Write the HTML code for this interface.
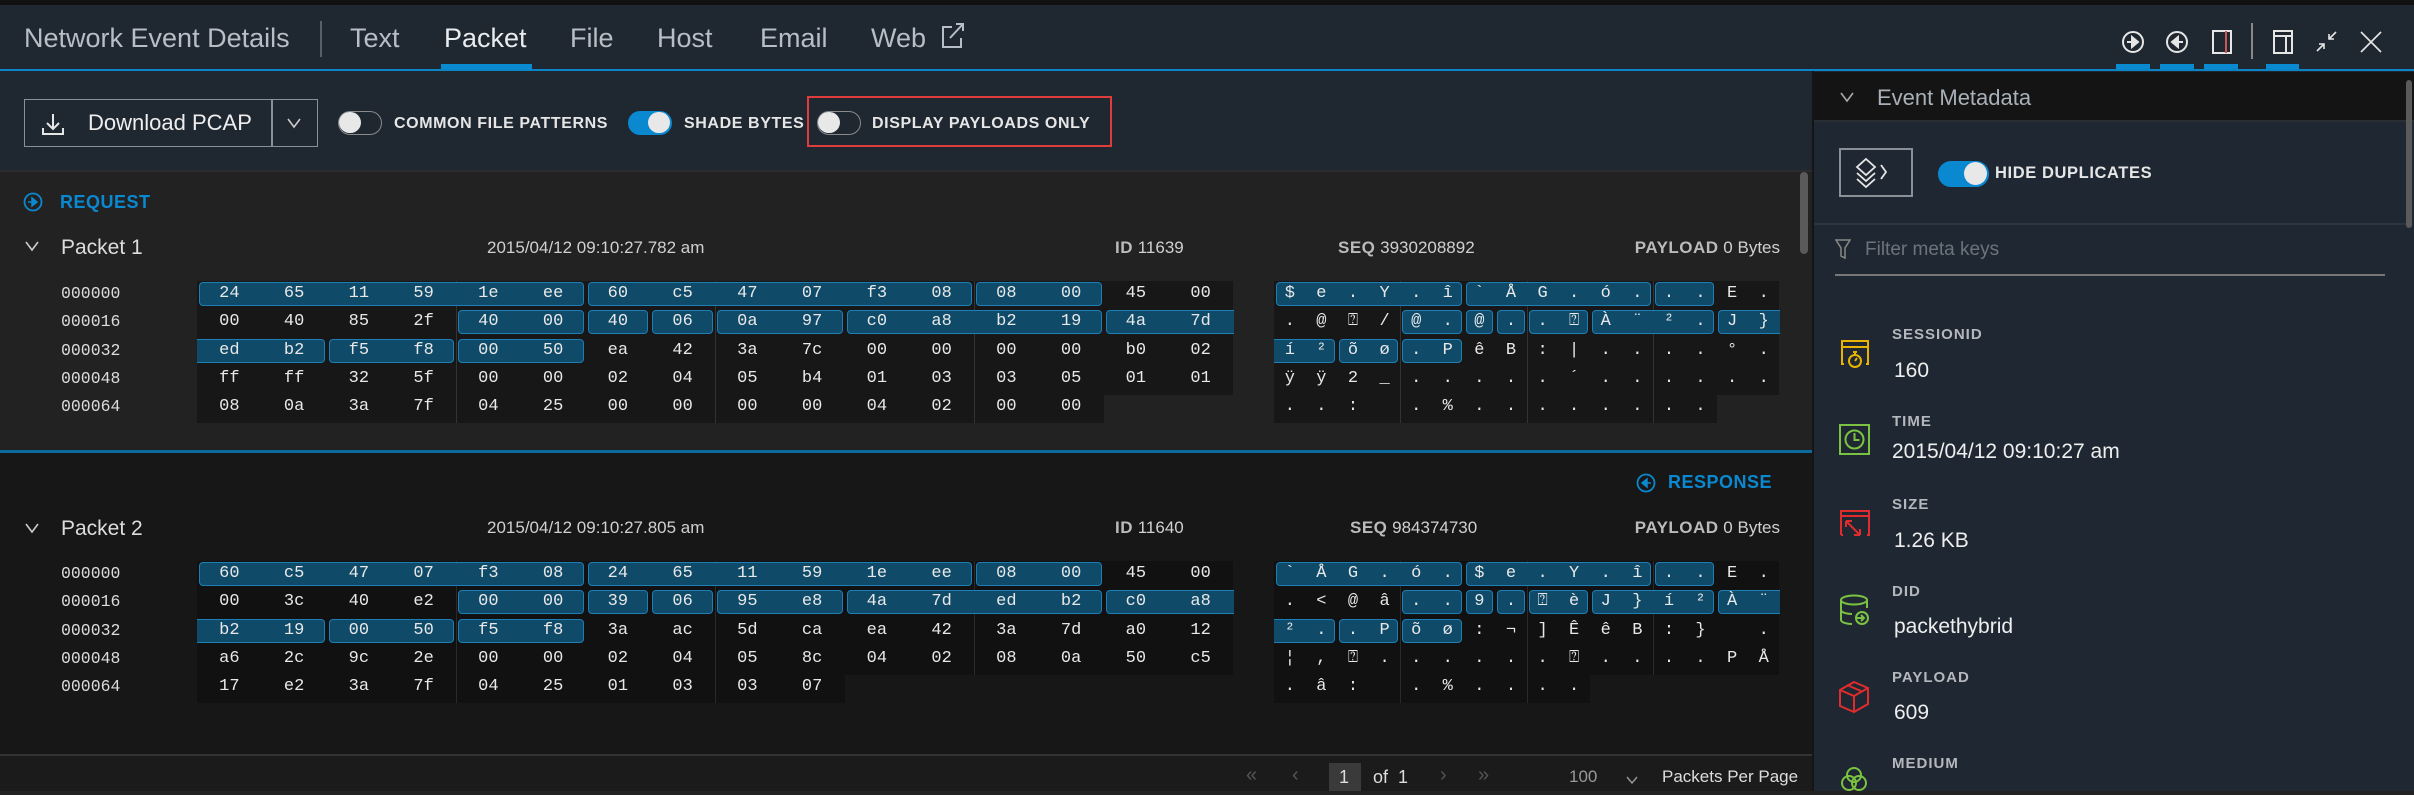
<!DOCTYPE html>
<html><head><meta charset="utf-8"><style>
*{margin:0;padding:0;box-sizing:border-box}
body{width:2414px;height:791px;overflow:hidden;background:#222;font-family:"Liberation Sans",sans-serif;color:#ddd;position:relative}
.a{position:absolute}
.top{left:0;top:0;width:2414px;height:5px;background:#111}
.hdr{left:0;top:5px;width:2414px;height:64px;background:#1f2731}
.bl{left:0;top:69px;width:2414px;height:2px;background:#0a86c8}
.tb{left:0;top:71px;width:1812px;height:101px;background:#1f2731;border-bottom:2px solid #2c2c2c}
.tab{top:18px;font-size:27px;color:#b8bec6;font-weight:300}
.lbl{font-size:16px;font-weight:bold;color:#e6e6e6;letter-spacing:.6px}
.tg{width:44px;height:24px;border-radius:12px;border:1.5px solid #8a8a8a;background:#1f2731}
.tg i{position:absolute;left:0;top:0;width:22px;height:21px;border-radius:11px;background:#e8e8e8}
.tg.on{background:#0a88d0;border-color:#0a88d0}
.tg.on i{left:19px}
.r{position:absolute;display:flex;height:24px;line-height:24px;font-family:"Liberation Mono",monospace;font-size:17px;color:#e8e8e8}
.r.hx b{width:64.75px;text-align:center;font-weight:normal;position:relative;z-index:1}
.r.as b{width:31.6px;text-align:center;font-weight:normal;position:relative;z-index:1}
.r i{position:absolute;top:0;height:24px;background:#0f4a68;border:1.5px solid #1d7fb6;border-radius:4px}
.off{font-family:"Liberation Mono",monospace;font-size:16.5px;color:#ddd;left:61px}
.hbg{background:#171717}
.vl{width:1px;background:#333}
.ph{font-size:17px;color:#d0d0d0}
.ph b{color:#bbb;letter-spacing:.5px}
.mk{font-size:15px;font-weight:bold;color:#b4b8bd;letter-spacing:1px;left:1892px}
.mv{font-size:21px;color:#eee;left:1894px}
</style></head><body>
<div class="a top"></div>
<div class="a hdr">
 <div class="a" style="left:24px;top:18px;font-size:27px;color:#b8bec6">Network Event Details</div>
 <div class="a" style="left:320px;top:16px;width:2px;height:36px;background:#5a6068"></div>
 <div class="a tab" style="left:350px">Text</div>
 <div class="a tab" style="left:444px;color:#e8ecef">Packet</div>
 <div class="a tab" style="left:570px">File</div>
 <div class="a tab" style="left:657px">Host</div>
 <div class="a tab" style="left:760px">Email</div>
 <div class="a tab" style="left:871px">Web</div>
 <svg class="a" style="left:940px;top:16px" width="26" height="28" viewBox="0 0 26 28" fill="none" stroke="#b8bec6" stroke-width="2"><path d="M12 6H3v20h18v-9"/><path d="M10 17L23 3M16 3h7v7"/></svg>
 <div class="a" style="left:441px;top:59px;width:91px;height:5px;background:#0a8ad0"></div>
 <svg class="a" style="left:2110px;top:14px" width="290" height="46" viewBox="0 0 290 46" fill="none" stroke="#e6e6e6" stroke-width="2">
  <circle cx="23" cy="23" r="10"/><path d="M17 23h7M22 18l6 5-6 5z" fill="#e6e6e6"/>
  <circle cx="67" cy="23" r="10"/><path d="M73 23h-7M68 18l-6 5 6 5z" fill="#e6e6e6"/>
  <rect x="103" y="12" width="18" height="22"/><path d="M116 12v22" stroke="#c55"/>
  <path d="M142 4v36" stroke="#888"/>
  <rect x="164" y="12" width="18" height="22"/><path d="M164 17h18M176 17v17"/>
  <path d="M207 32l7-7M209 25h5v5M226 13l-7 7M219 15v5h5" stroke-width="1.6"/>
  <path d="M251 13l20 20M271 13l-20 20" stroke-width="1.6"/>
 </svg>
 <div class="a" style="left:2116px;top:59px;width:34px;height:5px;background:#0a8ad0"></div>
 <div class="a" style="left:2160px;top:59px;width:34px;height:5px;background:#0a8ad0"></div>
 <div class="a" style="left:2204px;top:59px;width:34px;height:5px;background:#0a8ad0"></div>
 <div class="a" style="left:2266px;top:59px;width:33px;height:5px;background:#0a8ad0"></div>
</div>
<div class="a bl"></div>
<div class="a tb">
 <div class="a" style="left:24px;top:28px;width:294px;height:48px;border:1.5px solid #8a9097"></div>
 <div class="a" style="left:271px;top:28px;width:1.5px;height:48px;background:#8a9097"></div>
 <svg class="a" style="left:40px;top:40px" width="26" height="26" viewBox="0 0 26 26" fill="none" stroke="#e6e6e6" stroke-width="2"><path d="M13 3v15M7 12l6 6 6-6M3 17v6h20v-6"/></svg>
 <div class="a" style="left:88px;top:39px;font-size:22px;color:#eee">Download PCAP</div>
 <svg class="a" style="left:286px;top:46px" width="16" height="12" viewBox="0 0 16 12" fill="none" stroke="#ccc" stroke-width="1.6"><path d="M2 2l6 8 6-8"/></svg>
 <div class="a tg" style="left:338px;top:40px"><i></i></div>
 <div class="a lbl" style="left:394px;top:44px">COMMON FILE PATTERNS</div>
 <div class="a tg on" style="left:628px;top:40px"><i></i></div>
 <div class="a lbl" style="left:684px;top:44px">SHADE BYTES</div>
 <div class="a" style="left:807px;top:25px;width:305px;height:51px;border:2.5px solid #e03c3c"></div>
 <div class="a tg" style="left:817px;top:40px"><i></i></div>
 <div class="a lbl" style="left:872px;top:44px">DISPLAY PAYLOADS ONLY</div>
</div>

<div class="a" style="left:0;top:174px;width:1812px;height:276px;background:#222"></div>
<svg class="a" style="left:23px;top:192px" width="20" height="20" viewBox="0 0 20 20"><circle cx="10" cy="10" r="8.5" fill="none" stroke="#0a88d0" stroke-width="1.8"/><path d="M5 10h5M9 6l5 4-5 4z" fill="#0a88d0" stroke="#0a88d0" stroke-width="1.5"/></svg>
<div class="a" style="left:60px;top:192px;font-size:18px;font-weight:bold;color:#0a88d0;letter-spacing:.5px">REQUEST</div>
<svg class="a" style="left:24px;top:240px" width="16" height="12" viewBox="0 0 16 12" fill="none" stroke="#ccc" stroke-width="1.6"><path d="M2 2l6 8 6-8"/></svg>
<div class="a" style="left:61px;top:236px;font-size:21px;color:#ddd">Packet 1</div>
<div class="a ph" style="left:487px;top:238px">2015/04/12 09:10:27.782 am</div>
<div class="a ph" style="left:1115px;top:238px"><b>ID</b> 11639</div>
<div class="a ph" style="left:1338px;top:238px"><b>SEQ</b> 3930208892</div>
<div class="a ph" style="left:1612px;top:238px;width:168px;text-align:right"><b>PAYLOAD</b> 0 Bytes</div>

<div class="a hbg" style="left:197px;top:281px;width:1036px;height:114px"></div>
<div class="a hbg" style="left:197px;top:395px;width:907px;height:28px"></div>
<div class="a vl" style="left:456px;top:281px;height:142px"></div>
<div class="a vl" style="left:715px;top:281px;height:142px"></div>
<div class="a vl" style="left:974px;top:281px;height:142px"></div>
<div class="a hbg" style="left:1274px;top:281px;width:505px;height:114px"></div>
<div class="a hbg" style="left:1274px;top:395px;width:443px;height:28px"></div>
<div class="a vl" style="left:1400px;top:281px;height:142px"></div>
<div class="a vl" style="left:1527px;top:281px;height:142px"></div>
<div class="a vl" style="left:1653px;top:281px;height:142px"></div>

<div class="a off" style="top:284px">000000</div>
<div class="a off" style="top:312px">000016</div>
<div class="a off" style="top:341px">000032</div>
<div class="a off" style="top:369px">000048</div>
<div class="a off" style="top:397px">000064</div>

<div class="r hx" style="left:197px;top:282px"><i style="left:2px;width:384.5px"></i><i style="left:390.5px;width:384.5px"></i><i style="left:779px;width:125.5px"></i><b>24</b><b>65</b><b>11</b><b>59</b><b>1e</b><b>ee</b><b>60</b><b>c5</b><b>47</b><b>07</b><b>f3</b><b>08</b><b>08</b><b>00</b><b>45</b><b>00</b></div>
<div class="r hx" style="left:197px;top:310px"><i style="left:261px;width:125.5px"></i><i style="left:390.5px;width:60.75px"></i><i style="left:455.25px;width:60.75px"></i><i style="left:520px;width:125.5px"></i><i style="left:649.5px;width:255px"></i><i style="left:908.5px;width:128px;border-radius:4px 0 0 4px;border-right:none"></i><b>00</b><b>40</b><b>85</b><b>2f</b><b>40</b><b>00</b><b>40</b><b>06</b><b>0a</b><b>97</b><b>c0</b><b>a8</b><b>b2</b><b>19</b><b>4a</b><b>7d</b></div>
<div class="r hx" style="left:197px;top:339px"><i style="left:0;width:127.5px;border-radius:0 4px 4px 0;border-left:none"></i><i style="left:131.5px;width:125.5px"></i><i style="left:261px;width:125.5px"></i><b>ed</b><b>b2</b><b>f5</b><b>f8</b><b>00</b><b>50</b><b>ea</b><b>42</b><b>3a</b><b>7c</b><b>00</b><b>00</b><b>00</b><b>00</b><b>b0</b><b>02</b></div>
<div class="r hx" style="left:197px;top:367px"><b>ff</b><b>ff</b><b>32</b><b>5f</b><b>00</b><b>00</b><b>02</b><b>04</b><b>05</b><b>b4</b><b>01</b><b>03</b><b>03</b><b>05</b><b>01</b><b>01</b></div>
<div class="r hx" style="left:197px;top:395px"><b>08</b><b>0a</b><b>3a</b><b>7f</b><b>04</b><b>25</b><b>00</b><b>00</b><b>00</b><b>00</b><b>04</b><b>02</b><b>00</b><b>00</b></div>

<div class="r as" style="left:1274px;top:282px"><i style="left:2px;width:185.6px"></i><i style="left:191.6px;width:185.6px"></i><i style="left:381.2px;width:59.2px"></i><b>$</b><b>e</b><b>.</b><b>Y</b><b>.</b><b>î</b><b>`</b><b>Å</b><b>G</b><b>.</b><b>ó</b><b>.</b><b>.</b><b>.</b><b>E</b><b>.</b></div>
<div class="r as" style="left:1274px;top:310px"><i style="left:128.4px;width:59.2px"></i><i style="left:191.6px;width:27.6px"></i><i style="left:223.2px;width:27.6px"></i><i style="left:254.8px;width:59.2px"></i><i style="left:318px;width:122.4px"></i><i style="left:444.4px;width:61.2px;border-radius:4px 0 0 4px;border-right:none"></i><b>.</b><b>@</b><b>⍰</b><b>/</b><b>@</b><b>.</b><b>@</b><b>.</b><b>.</b><b>⍰</b><b>À</b><b>¨</b><b>²</b><b>.</b><b>J</b><b>}</b></div>
<div class="r as" style="left:1274px;top:339px"><i style="left:0;width:61.2px;border-radius:0 4px 4px 0;border-left:none"></i><i style="left:65.2px;width:59.2px"></i><i style="left:128.4px;width:59.2px"></i><b>í</b><b>²</b><b>õ</b><b>ø</b><b>.</b><b>P</b><b>ê</b><b>B</b><b>:</b><b>|</b><b>.</b><b>.</b><b>.</b><b>.</b><b>°</b><b>.</b></div>
<div class="r as" style="left:1274px;top:367px"><b>ÿ</b><b>ÿ</b><b>2</b><b>_</b><b>.</b><b>.</b><b>.</b><b>.</b><b>.</b><b>´</b><b>.</b><b>.</b><b>.</b><b>.</b><b>.</b><b>.</b></div>
<div class="r as" style="left:1274px;top:395px"><b>.</b><b>.</b><b>:</b><b> </b><b>.</b><b>%</b><b>.</b><b>.</b><b>.</b><b>.</b><b>.</b><b>.</b><b>.</b><b>.</b></div>

<div class="a" style="left:0;top:450px;width:1812px;height:3px;background:#0b6a9e"></div>

<div class="a" style="left:0;top:453px;width:1812px;height:302px;background:#171717"></div>
<svg class="a" style="left:1636px;top:473px" width="20" height="20" viewBox="0 0 20 20"><circle cx="10" cy="10" r="8.5" fill="none" stroke="#0a88d0" stroke-width="1.8"/><path d="M15 10h-5M11 6l-5 4 5 4z" fill="#0a88d0" stroke="#0a88d0" stroke-width="1.5"/></svg>
<div class="a" style="left:1668px;top:472px;font-size:18px;font-weight:bold;color:#0a88d0;letter-spacing:.5px">RESPONSE</div>
<svg class="a" style="left:24px;top:522px" width="16" height="12" viewBox="0 0 16 12" fill="none" stroke="#ccc" stroke-width="1.6"><path d="M2 2l6 8 6-8"/></svg>
<div class="a" style="left:61px;top:517px;font-size:21px;color:#ddd">Packet 2</div>
<div class="a ph" style="left:487px;top:518px">2015/04/12 09:10:27.805 am</div>
<div class="a ph" style="left:1115px;top:518px"><b>ID</b> 11640</div>
<div class="a ph" style="left:1350px;top:518px"><b>SEQ</b> 984374730</div>
<div class="a ph" style="left:1612px;top:518px;width:168px;text-align:right"><b>PAYLOAD</b> 0 Bytes</div>

<div class="a" style="left:197px;top:561px;width:1036px;height:114px;background:#111"></div>
<div class="a" style="left:197px;top:675px;width:648px;height:28px;background:#111"></div>
<div class="a vl" style="left:456px;top:561px;height:142px;background:#2a2a2a"></div>
<div class="a vl" style="left:715px;top:561px;height:142px;background:#2a2a2a"></div>
<div class="a vl" style="left:974px;top:561px;height:114px;background:#2a2a2a"></div>
<div class="a" style="left:1274px;top:561px;width:505px;height:114px;background:#111"></div>
<div class="a" style="left:1274px;top:675px;width:316px;height:28px;background:#111"></div>
<div class="a vl" style="left:1400px;top:561px;height:142px;background:#2a2a2a"></div>
<div class="a vl" style="left:1527px;top:561px;height:142px;background:#2a2a2a"></div>
<div class="a vl" style="left:1653px;top:561px;height:114px;background:#2a2a2a"></div>

<div class="a off" style="top:564px">000000</div>
<div class="a off" style="top:592px">000016</div>
<div class="a off" style="top:621px">000032</div>
<div class="a off" style="top:649px">000048</div>
<div class="a off" style="top:677px">000064</div>

<div class="r hx" style="left:197px;top:562px"><i style="left:2px;width:384.5px"></i><i style="left:390.5px;width:384.5px"></i><i style="left:779px;width:125.5px"></i><b>60</b><b>c5</b><b>47</b><b>07</b><b>f3</b><b>08</b><b>24</b><b>65</b><b>11</b><b>59</b><b>1e</b><b>ee</b><b>08</b><b>00</b><b>45</b><b>00</b></div>
<div class="r hx" style="left:197px;top:590px"><i style="left:261px;width:125.5px"></i><i style="left:390.5px;width:60.75px"></i><i style="left:455.25px;width:60.75px"></i><i style="left:520px;width:125.5px"></i><i style="left:649.5px;width:255px"></i><i style="left:908.5px;width:128px;border-radius:4px 0 0 4px;border-right:none"></i><b>00</b><b>3c</b><b>40</b><b>e2</b><b>00</b><b>00</b><b>39</b><b>06</b><b>95</b><b>e8</b><b>4a</b><b>7d</b><b>ed</b><b>b2</b><b>c0</b><b>a8</b></div>
<div class="r hx" style="left:197px;top:619px"><i style="left:0;width:127.5px;border-radius:0 4px 4px 0;border-left:none"></i><i style="left:131.5px;width:125.5px"></i><i style="left:261px;width:125.5px"></i><b>b2</b><b>19</b><b>00</b><b>50</b><b>f5</b><b>f8</b><b>3a</b><b>ac</b><b>5d</b><b>ca</b><b>ea</b><b>42</b><b>3a</b><b>7d</b><b>a0</b><b>12</b></div>
<div class="r hx" style="left:197px;top:647px"><b>a6</b><b>2c</b><b>9c</b><b>2e</b><b>00</b><b>00</b><b>02</b><b>04</b><b>05</b><b>8c</b><b>04</b><b>02</b><b>08</b><b>0a</b><b>50</b><b>c5</b></div>
<div class="r hx" style="left:197px;top:675px"><b>17</b><b>e2</b><b>3a</b><b>7f</b><b>04</b><b>25</b><b>01</b><b>03</b><b>03</b><b>07</b></div>

<div class="r as" style="left:1274px;top:562px"><i style="left:2px;width:185.6px"></i><i style="left:191.6px;width:185.6px"></i><i style="left:381.2px;width:59.2px"></i><b>`</b><b>Å</b><b>G</b><b>.</b><b>ó</b><b>.</b><b>$</b><b>e</b><b>.</b><b>Y</b><b>.</b><b>î</b><b>.</b><b>.</b><b>E</b><b>.</b></div>
<div class="r as" style="left:1274px;top:590px"><i style="left:128.4px;width:59.2px"></i><i style="left:191.6px;width:27.6px"></i><i style="left:223.2px;width:27.6px"></i><i style="left:254.8px;width:59.2px"></i><i style="left:318px;width:122.4px"></i><i style="left:444.4px;width:61.2px;border-radius:4px 0 0 4px;border-right:none"></i><b>.</b><b>&lt;</b><b>@</b><b>â</b><b>.</b><b>.</b><b>9</b><b>.</b><b>⍰</b><b>è</b><b>J</b><b>}</b><b>í</b><b>²</b><b>À</b><b>¨</b></div>
<div class="r as" style="left:1274px;top:619px"><i style="left:0;width:61.2px;border-radius:0 4px 4px 0;border-left:none"></i><i style="left:65.2px;width:59.2px"></i><i style="left:128.4px;width:59.2px"></i><b>²</b><b>.</b><b>.</b><b>P</b><b>õ</b><b>ø</b><b>:</b><b>¬</b><b>]</b><b>Ê</b><b>ê</b><b>B</b><b>:</b><b>}</b><b> </b><b>.</b></div>
<div class="r as" style="left:1274px;top:647px"><b>¦</b><b>,</b><b>⍰</b><b>.</b><b>.</b><b>.</b><b>.</b><b>.</b><b>.</b><b>⍰</b><b>.</b><b>.</b><b>.</b><b>.</b><b>P</b><b>Å</b></div>
<div class="r as" style="left:1274px;top:675px"><b>.</b><b>â</b><b>:</b><b> </b><b>.</b><b>%</b><b>.</b><b>.</b><b>.</b><b>.</b></div>

<div class="a" style="left:0;top:754px;width:1812px;height:37px;background:#1b1b1b;border-top:2px solid #333"></div>
<div class="a" style="left:1246px;top:764px;font-size:20px;color:#555">«</div>
<div class="a" style="left:1292px;top:764px;font-size:20px;color:#555">‹</div>
<div class="a" style="left:1329px;top:763px;width:32px;height:28px;background:#3a3a3a"></div>
<div class="a" style="left:1339px;top:767px;font-size:18px;color:#ddd">1</div>
<div class="a" style="left:1373px;top:767px;font-size:18px;color:#ddd">of&nbsp;&nbsp;1</div>
<div class="a" style="left:1440px;top:764px;font-size:20px;color:#555">›</div>
<div class="a" style="left:1478px;top:764px;font-size:20px;color:#555">»</div>
<div class="a" style="left:1569px;top:767px;font-size:17px;color:#999">100</div>
<svg class="a" style="left:1626px;top:776px" width="12" height="8" viewBox="0 0 12 8" fill="none" stroke="#999" stroke-width="1.4"><path d="M1 1l5 6 5-6"/></svg>
<div class="a" style="left:1662px;top:767px;font-size:17px;color:#ddd">Packets Per Page</div>

<div class="a" style="left:1800px;top:172px;width:8px;height:82px;border-radius:4px;background:#5a5a5a"></div>

<div class="a" style="left:1812px;top:71px;width:602px;height:720px;background:#1f2832;border-left:2px solid #151515"></div>
<div class="a" style="left:1814px;top:72px;width:600px;height:50px;background:#141414;border-bottom:2px solid #2a2f36"></div>
<svg class="a" style="left:1839px;top:91px" width="16" height="12" viewBox="0 0 16 12" fill="none" stroke="#aaa" stroke-width="1.6"><path d="M2 2l6 8 6-8"/></svg>
<div class="a" style="left:1877px;top:85px;font-size:22px;color:#aab0b8;font-weight:300">Event Metadata</div>
<div class="a" style="left:1839px;top:148px;width:74px;height:49px;border:2px solid #8a9097"></div>
<svg class="a" style="left:1850px;top:155px" width="52" height="36" viewBox="0 0 52 36" fill="none" stroke="#e6e6e6" stroke-width="1.8"><path d="M16 4l9 8-9 8-9-8z"/><path d="M7 18l9 8 9-8M7 24l9 8 9-8"/><path d="M31 10l5 7-5 7"/></svg>
<div class="a tg on" style="left:1938px;top:161px;width:51px;height:26px;border-radius:13px"><i style="left:25px;top:0;width:23px;height:23px;border-radius:12px"></i></div>
<div class="a lbl" style="left:1995px;top:164px;font-size:16.5px">HIDE DUPLICATES</div>
<div class="a" style="left:1814px;top:223px;width:596px;height:2px;background:#2c343d"></div>
<svg class="a" style="left:1835px;top:238px" width="16" height="22" viewBox="0 0 16 22" fill="none" stroke="#888" stroke-width="1.5"><path d="M1 2h14l-5 8v10l-4-2v-8z"/></svg>
<div class="a" style="left:1865px;top:239px;font-size:19px;color:#6c737b">Filter meta keys</div>
<div class="a" style="left:1835px;top:274px;width:550px;height:2px;background:#777"></div>
<div class="a" style="left:2406px;top:80px;width:6px;height:148px;border-radius:3px;background:#5a5a5a"></div>

<svg class="a" style="left:1838px;top:338px" width="34" height="34" viewBox="0 0 34 34" fill="none" stroke="#e8b400" stroke-width="2"><path d="M4 24V3h26v21M4 9h26M4 24v2h2M30 24v2h-2"/><circle cx="17" cy="23" r="6"/><path d="M17 23l2-3M15 14h4M17 14v3"/></svg>
<div class="a mk" style="top:326px">SESSIONID</div>
<div class="a mv" style="top:359px">160</div>
<svg class="a" style="left:1838px;top:423px" width="34" height="34" viewBox="0 0 34 34" fill="none" stroke="#7cc242" stroke-width="2"><rect x="2" y="2" width="29" height="29"/><circle cx="16.5" cy="16.5" r="9"/><path d="M16.5 10v7h5"/></svg>
<div class="a mk" style="top:413px">TIME</div>
<div class="a mv" style="top:440px;left:1892px">2015/04/12 09:10:27 am</div>
<svg class="a" style="left:1838px;top:508px" width="34" height="34" viewBox="0 0 34 34" fill="none" stroke="#e02c2c" stroke-width="2"><path d="M3 27V3h28v24h-2M3 27h2M3 8h28"/><path d="M8 13l14 14M8 13v6M8 13h6M22 27h-6M22 27v-6"/></svg>
<div class="a mk" style="top:496px">SIZE</div>
<div class="a mv" style="top:529px">1.26 KB</div>
<svg class="a" style="left:1838px;top:594px" width="34" height="34" viewBox="0 0 34 34" fill="none" stroke="#7cc242" stroke-width="2"><ellipse cx="16" cy="6" rx="13" ry="4.5"/><path d="M3 6v20c0 2.5 6 4 11 4M29 6v8M3 16c0 2.5 6 4 11 4"/><circle cx="24" cy="24" r="6"/><path d="M18 24h8M23 21l3 3-3 3"/></svg>
<div class="a mk" style="top:583px">DID</div>
<div class="a mv" style="top:615px">packethybrid</div>
<svg class="a" style="left:1838px;top:680px" width="34" height="34" viewBox="0 0 34 34" fill="none" stroke="#e02c2c" stroke-width="2"><path d="M16 2l14 6v16l-14 8-14-6V10z"/><path d="M2 10l14 6 14-8M16 16v16M9 5l14 6"/></svg>
<div class="a mk" style="top:669px">PAYLOAD</div>
<div class="a mv" style="top:701px">609</div>
<svg class="a" style="left:1838px;top:765px" width="34" height="30" viewBox="0 0 34 30" fill="none" stroke="#7cc242" stroke-width="2"><circle cx="16" cy="10" r="7"/><circle cx="11" cy="18" r="7"/><circle cx="21" cy="18" r="7"/></svg>
<div class="a mk" style="top:755px">MEDIUM</div>
</body></html>
